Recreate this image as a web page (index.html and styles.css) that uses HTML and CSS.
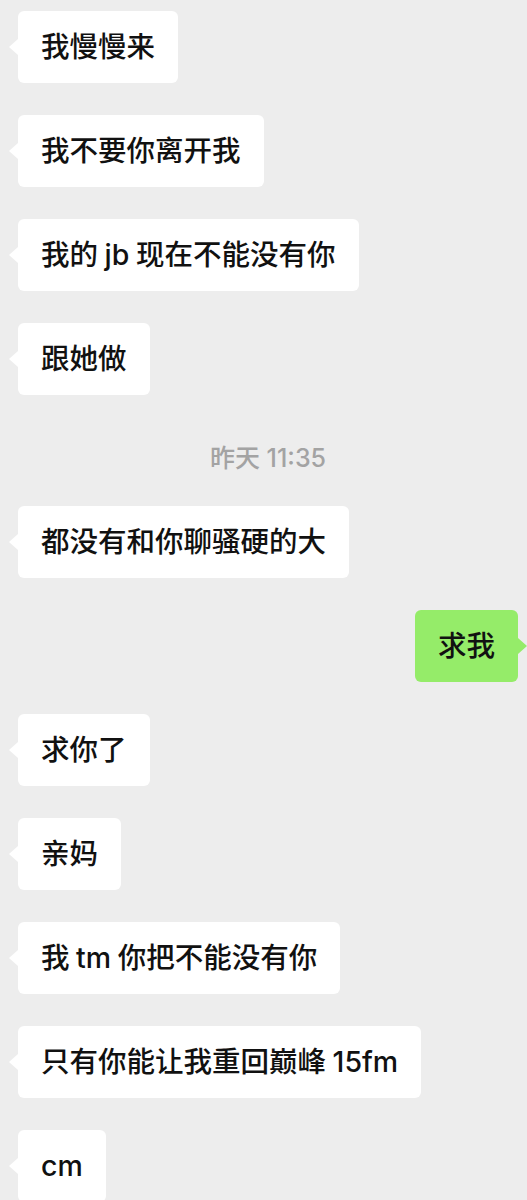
FILE: index.html
```html
<!DOCTYPE html>
<html lang="zh">
<head>
<meta charset="utf-8">
<link rel="stylesheet" href="styles.css">
</head>
<body>
<div class="chat">
  <div class="row left"><div class="bubble">我慢慢来</div></div>
  <div class="row left"><div class="bubble">我不要你离开我</div></div>
  <div class="row left"><div class="bubble">我的 jb 现在不能没有你</div></div>
  <div class="row left"><div class="bubble">跟她做</div></div>
  <div class="time">昨天 11:35</div>
  <div class="row left"><div class="bubble">都没有和你聊骚硬的大</div></div>
  <div class="row right"><div class="bubble green">求我</div></div>
  <div class="row left"><div class="bubble">求你了</div></div>
  <div class="row left"><div class="bubble">亲妈</div></div>
  <div class="row left"><div class="bubble">我 tm 你把不能没有你</div></div>
  <div class="row left"><div class="bubble">只有你能让我重回巅峰 15fm</div></div>
  <div class="row left"><div class="bubble">cm</div></div>
</div>
</body>
</html>
```

FILE: styles.css
```css
html, body {
  margin: 0;
  padding: 0;
  background: #ededed;
}
body {
  font-family: Inter, "Noto Sans CJK SC", "Noto Sans", sans-serif;
  width: 527px;
  height: 1200px;
  overflow: hidden;
}
.chat {
  display: flex;
  flex-direction: column;
  gap: 32px;
  padding: 11px 9px 0 18px;
}
.row {
  display: flex;
}
.row.right {
  justify-content: flex-end;
}
.bubble {
  position: relative;
  background: #ffffff;
  color: #111111;
  font-size: 28.5px;
  font-weight: 500;
  height: 72px;
  line-height: 72px;
  padding: 0 23px;
  border-radius: 6px;
  white-space: nowrap;
  word-spacing: -1px;
}
.bubble::before {
  content: "";
  position: absolute;
  top: 28px;
  left: -9px;
  border-style: solid;
  border-width: 8px 9px 8px 0;
  border-color: transparent #ffffff transparent transparent;
}
.bubble.green {
  background: #95ec69;
}
.bubble.green::before {
  left: auto;
  right: -9px;
  border-width: 8px 0 8px 9px;
  border-color: transparent transparent transparent #95ec69;
}
.time {
  height: 47px;
  padding-top: 17px;
  box-sizing: border-box;
  line-height: 28px;
  text-align: center;
  font-size: 25px;
  font-weight: 500;
  color: #a3a3a3;
}
```
